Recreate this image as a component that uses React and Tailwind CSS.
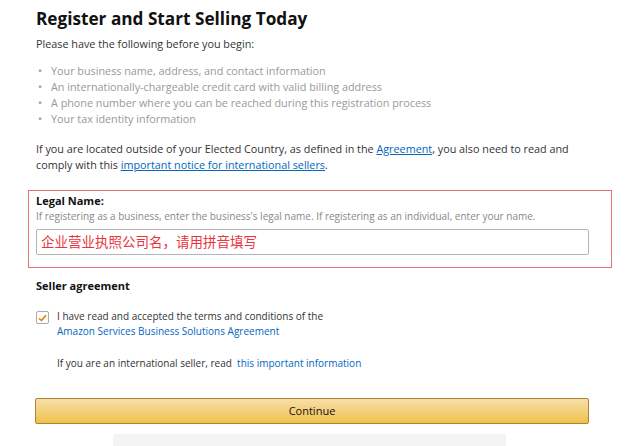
export default function App() {
  const bullets = [
    "Your business name, address, and contact information",
    "An internationally-chargeable credit card with valid billing address",
    "A phone number where you can be reached during this registration process",
    "Your tax identity information",
  ];
  return (
    <div className="w-[640px] h-[446px] overflow-hidden bg-white text-[#333]" style={{ fontFamily: '"Open Sans", "Noto Sans CJK SC", sans-serif' }}>
      <div className="pl-[36px] pr-[51px] pt-[6px]">
        <h1 className="text-[17.2px] leading-[26px] font-bold text-[#111]">Register and Start Selling Today</h1>
        <p className="mt-[4px] text-[10.8px] leading-[16px]">Please have the following before you begin:</p>
        <ul className="mt-[11px] text-[10.8px] leading-[16px] text-[#999]">
          {bullets.map((b) => (
            <li key={b} className="flex">
              <span className="w-[15px] pl-[2px]">•</span>
              <span>{b}</span>
            </li>
          ))}
        </ul>
        <div className="mt-[14px] text-[10.8px] leading-[16px]">
          <div>
            If you are located outside of your Elected Country, as defined in the <span className="text-[#0066c0] underline">Agreement</span>, you also need to read and
          </div>
          <div>
            comply with this <span className="text-[#0066c0] underline">important notice for international sellers</span>.
          </div>
        </div>
      </div>
      <div className="ml-[28px] w-[584px] mt-[17px] h-[78px] border border-[#e0707c] pl-[7px] pt-[2px]">
        <div className="text-[11px] leading-[16px] font-bold text-[#111]">Legal Name:</div>
        <div className="text-[10px] leading-[15px] text-[#888]">If registering as a business, enter the business's legal name. If registering as an individual, enter your name.</div>
        <div className="mt-[5px] w-[553px] h-[26px] border border-[#b5b5b5] rounded-[2px] flex items-center pl-[4px] text-[13.5px] text-[#e8343c]">
          企业营业执照公司名，请用拼音填写
        </div>
      </div>
      <div className="pl-[36px]">
        <div className="mt-[10px] text-[11px] leading-[16px] font-bold text-[#111]">Seller agreement</div>
        <div className="mt-[15px] flex">
          <div className="mt-[2px] w-[13px] h-[13px] border border-[#aaa] rounded-[2px] flex items-center justify-center">
            <svg width="9" height="8" viewBox="0 0 9 8"><path d="M1 4.5 L3.5 6.5 L8 1.2" fill="none" stroke="#e77600" strokeWidth="1.6" /></svg>
          </div>
          <div className="ml-[8px] text-[10px] leading-[15px]">
            <div>I have read and accepted the terms and conditions of the</div>
            <div className="text-[#0066c0]">Amazon Services Business Solutions Agreement</div>
          </div>
        </div>
        <div className="mt-[17px] pl-[21px] text-[10px] leading-[15px]">
          If you are an international seller, read <span className="text-[#0066c0]">&nbsp;this important information</span>
        </div>
      </div>
      <div className="ml-[35px] mt-[27px] w-[554px] h-[26px] border border-[#a88734] rounded-[2px] bg-gradient-to-b from-[#f7dfa5] to-[#f0c14b] flex items-center justify-center text-[11px] text-[#111]">
        Continue
      </div>
      <div className="ml-[113px] mt-[10px] w-[393px] h-[20px] bg-[#f3f3f3] rounded-[3px]"></div>
    </div>
  );
}
